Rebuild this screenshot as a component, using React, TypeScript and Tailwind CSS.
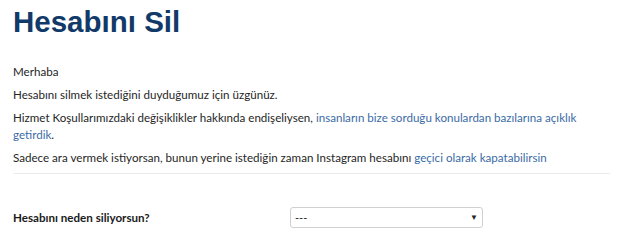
import React from "react"

export default function App() {
  return (
    <div className="w-[620px] h-[250px] bg-white overflow-hidden px-[13px] text-[11.6px] leading-[17px] text-[#262626]" style={{ fontFamily: 'Lato, sans-serif' }}>
      <h1 className="pt-[4px] text-[29.5px] leading-[36px] font-bold text-[#113a69]" style={{ fontFamily: '"Liberation Sans", Arial, sans-serif' }}>
        Hesabını Sil
      </h1>
      <div className="mt-[23px] flex flex-col gap-[6px]">
        <p>Merhaba</p>
        <p>Hesabını silmek istediğini duyduğumuz için üzgünüz.</p>
        <p>
          Hizmet Koşullarımızdaki değişiklikler hakkında endişeliysen,{" "}
          <a className="text-[#3b6ba5]">insanların bize sorduğu konulardan bazılarına açıklık getirdik</a>.
        </p>
        <p>
          Sadece ara vermek istiyorsan, bunun yerine istediğin zaman Instagram hesabını{" "}
          <a className="text-[#3b6ba5]">geçici olarak kapatabilirsin</a>
        </p>
      </div>
      <div className="mt-[7px] h-px bg-[#ececec] w-[597px]" />
      <div className="mt-[33px] flex items-center">
        <label className="w-[277px] font-bold text-[#1a1a1a]">Hesabını neden siliyorsun?</label>
        <div className="w-[193px] h-[21px] border border-[#d0d0d0] rounded-[3px] flex items-center justify-between px-[4px] text-[11px]">
          <span>---</span>
          <span className="text-[8px]">▼</span>
        </div>
      </div>
    </div>
  )
}
